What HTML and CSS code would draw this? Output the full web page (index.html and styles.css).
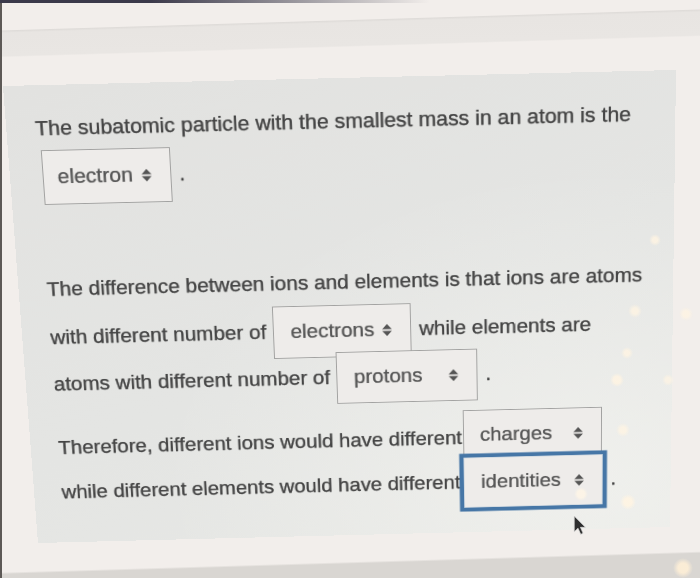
FILE: index.html
```html
<!DOCTYPE html>
<html lang="en">
<head>
<meta charset="utf-8">
<title>Question</title>
<link rel="stylesheet" href="styles.css">
</head>
<body>
<div class="card">
  <div class="para p1">
    <div class="row r52"><span class="txt">The subatomic particle with the smallest mass in an atom is the</span></div>
    <div class="row r52">
      <span class="sel w130 first"><span class="val">electron</span><svg class="arr" viewBox="0 0 10 15" width="10" height="15"><path d="M0 6.5 L5 0.8 L10 6.5 Z M0 8.5 L5 14.2 L10 8.5 Z"/></svg></span><span class="txt">.</span>
    </div>
  </div>
  <div class="para p2">
    <div class="row r535"><span class="txt">The difference between ions and elements is that ions are atoms</span></div>
    <div class="row r535">
      <span class="txt">with different number of</span>
      <span class="sel w143"><span class="val">electrons</span><svg class="arr" viewBox="0 0 10 15" width="10" height="15"><path d="M0 6.5 L5 0.8 L10 6.5 Z M0 8.5 L5 14.2 L10 8.5 Z"/></svg></span>
      <span class="txt">while elements are</span>
    </div>
    <div class="row r535">
      <span class="txt">atoms with different number of</span>
      <span class="sel w147"><span class="val">protons</span><svg class="arr" viewBox="0 0 10 15" width="10" height="15"><path d="M0 6.5 L5 0.8 L10 6.5 Z M0 8.5 L5 14.2 L10 8.5 Z"/></svg></span><span class="txt">.</span>
    </div>
  </div>
  <div class="para p3">
    <div class="row r55">
      <span class="txt low">Therefore, different ions would have different</span>
      <span class="sel w146 tight"><span class="val">charges</span><svg class="arr" viewBox="0 0 10 15" width="10" height="15"><path d="M0 6.5 L5 0.8 L10 6.5 Z M0 8.5 L5 14.2 L10 8.5 Z"/></svg></span>
    </div>
    <div class="row r55">
      <span class="txt">while different elements would have different</span>
      <span class="sel w147 focus"><span class="val">identities</span><svg class="arr" viewBox="0 0 10 15" width="10" height="15"><path d="M0 6.5 L5 0.8 L10 6.5 Z M0 8.5 L5 14.2 L10 8.5 Z"/></svg></span><span class="txt">.</span>
    </div>
  </div>
</div>
<div class="glare"></div>
<svg class="cursor" viewBox="0 0 12 19" width="13" height="20"><path d="M1 1 L1 16 L4.6 12.6 L7.2 18.4 L9.4 17.4 L6.9 11.7 L11.6 11.7 Z"/></svg>
</body>
</html>
```
FILE: styles.css
```css
html, body {
  margin: 0;
  padding: 0;
  width: 700px;
  height: 578px;
  overflow: hidden;
}

body {
  position: relative;
  font-family: "Liberation Sans", Arial, Helvetica, sans-serif;
  background:
    linear-gradient(to right, #3b394a 0, #3b394a 150px, rgba(59, 57, 74, 0) 430px) no-repeat 0 0 / 100% 3px,
    linear-gradient(#5d5956, #5d5956) no-repeat 0 0 / 2px 100%,
    linear-gradient(178.28deg, rgba(216, 212, 208, 0) 572px, #d9d6d2 574px),
    linear-gradient(178.28deg, rgba(231, 228, 225, 0) 30px, #dfdcd9 31px, #e8e5e2 33px, #e9e6e3 56px, rgba(233, 230, 227, 0) 57.5px),
    #f2eeeb;
}

.card {
  box-sizing: border-box;
  width: 673px;
  height: 512px;
  padding: 20px 0 0 29px;
  transform-origin: 0 0;
  transform: matrix3d(1.002282, -0.023538, 0, 0.000003376, 0.073176, 0.961402, 0, 0.00012675, 0, 0, 1, 0, 3, 86, 0, 1);
  background:
    radial-gradient(ellipse at 88% 88%, rgba(250, 250, 246, 0.45), rgba(250, 250, 246, 0) 55%),
    linear-gradient(160deg, #e2e2e0, #e4e5e3 55%, #e7e8e5);
  color: #454545;
  font-size: 21.4px;
  -webkit-text-stroke: 0.25px #454545;
  text-shadow: 0 0 0.8px rgba(60, 60, 60, 0.45);
}

.para {
  display: flex;
  flex-direction: column;
}

.p2 {
  margin-top: 71px;
}

.p3 {
  margin-top: 15px;
}

.row {
  display: flex;
  align-items: center;
  white-space: nowrap;
}

.r52 { height: 52px; }
.r535 { height: 53.5px; }
.r55 { height: 55px; }

.txt {
  flex: none;
}

.low {
  margin-top: 6px;
}

.sel {
  flex: none;
  box-sizing: border-box;
  display: flex;
  align-items: center;
  height: 59px;
  margin: 0 8px 0 7px;
  padding: 0 19px 0 17px;
  border: 1px solid #a2a2a1;
  background: #eeecea;
  color: #575757;
  -webkit-text-stroke: 0.2px #575757;
}

.first {
  margin-left: 4px;
  padding-left: 14px;
}

.tight {
  margin-left: 1px;
}

.w130 { width: 130px; }
.w143 { width: 143px; }
.w146 { width: 146px; }
.w147 { width: 147px; }

.focus {
  margin-left: 4px;
  border-color: #cfd8e0;
  box-shadow: 0 0 0 4.5px #4676a6;
}

.arr {
  margin-left: auto;
  fill: #555555;
}

.glare {
  position: absolute;
  left: 0;
  top: 0;
  width: 700px;
  height: 578px;
  pointer-events: none;
  background:
    radial-gradient(circle at 655px 240px, rgba(255, 244, 226, 0.8) 0, rgba(255, 244, 226, 0.8) 2.5px, rgba(255, 244, 226, 0) 6px),
    radial-gradient(circle at 635px 311px, rgba(255, 244, 226, 0.75) 0, rgba(255, 244, 226, 0.75) 3px, rgba(255, 244, 226, 0) 7px),
    radial-gradient(circle at 686px 314px, rgba(255, 244, 226, 0.75) 0, rgba(255, 244, 226, 0.75) 3px, rgba(255, 244, 226, 0) 7px),
    radial-gradient(circle at 627px 353px, rgba(255, 244, 226, 0.8) 0, rgba(255, 244, 226, 0.8) 2.5px, rgba(255, 244, 226, 0) 6px),
    radial-gradient(circle at 617px 380px, rgba(255, 244, 226, 0.85) 0, rgba(255, 244, 226, 0.85) 3.5px, rgba(255, 244, 226, 0) 7px),
    radial-gradient(circle at 668px 380px, rgba(255, 244, 226, 0.7) 0, rgba(255, 244, 226, 0.7) 2.5px, rgba(255, 244, 226, 0) 6px),
    radial-gradient(circle at 623px 430px, rgba(255, 244, 226, 0.75) 0, rgba(255, 244, 226, 0.75) 3px, rgba(255, 244, 226, 0) 7px),
    radial-gradient(circle at 581px 494px, rgba(255, 246, 230, 0.8) 0, rgba(255, 246, 230, 0.8) 3.5px, rgba(255, 246, 230, 0) 7px),
    radial-gradient(circle at 628px 502px, rgba(255, 244, 226, 0.85) 0, rgba(255, 244, 226, 0.85) 4px, rgba(255, 244, 226, 0) 8px),
    radial-gradient(circle at 683px 568px, rgba(255, 240, 215, 0.85) 0, rgba(255, 240, 215, 0.85) 5px, rgba(255, 240, 215, 0) 10px);
}

.cursor {
  position: absolute;
  left: 573px;
  top: 515px;
  fill: #2e2e2e;
  stroke: #d8d8d8;
  stroke-width: 0.7;
}
```
